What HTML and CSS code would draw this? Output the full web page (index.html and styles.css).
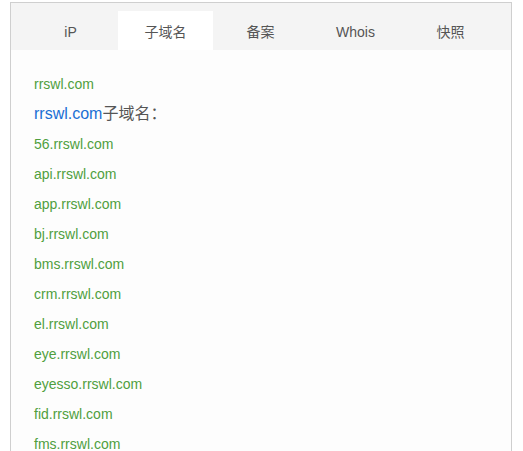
FILE: index.html
```html
<!DOCTYPE html>
<html lang="zh">
<head>
<meta charset="utf-8">
<link rel="stylesheet" href="styles.css">
</head>
<body>
<div class="panel">
  <div class="tabs">
    <div class="tab">iP</div>
    <div class="tab active">子域名</div>
    <div class="tab">备案</div>
    <div class="tab">Whois</div>
    <div class="tab">快照</div>
  </div>
  <div class="content">
    <div class="item">rrswl.com</div>
    <div class="heading"><span class="dom">rrswl.com</span>子域名：</div>
    <div class="item">56.rrswl.com</div>
    <div class="item">api.rrswl.com</div>
    <div class="item">app.rrswl.com</div>
    <div class="item">bj.rrswl.com</div>
    <div class="item">bms.rrswl.com</div>
    <div class="item">crm.rrswl.com</div>
    <div class="item">el.rrswl.com</div>
    <div class="item">eye.rrswl.com</div>
    <div class="item">eyesso.rrswl.com</div>
    <div class="item">fid.rrswl.com</div>
    <div class="item">fms.rrswl.com</div>
  </div>
</div>
</body>
</html>
```
FILE: styles.css
```css
html, body {
  margin: 0;
  padding: 0;
  background: #fff;
  overflow: hidden;
}
body {
  font-family: "Liberation Sans", Arial, "Noto Sans CJK SC", sans-serif;
  font-size: 14px;
  color: #555;
}
.panel {
  margin: 2px 0 0 10px;
  width: 502px;
  box-sizing: border-box;
  border: 1px solid #cfcfcf;
  background: #fdfdfd;
}
.tabs {
  display: flex;
  background: #f4f4f4;
  padding: 8px 0 0 12px;
}
.tab {
  width: 95px;
  height: 39px;
  box-sizing: border-box;
  padding-top: 3px;
  line-height: 36px;
  text-align: center;
  font-size: 14px;
  color: #555;
}
.tab.active {
  background: #fff;
}
.content {
  padding: 19px 23px 0;
}
.item {
  line-height: 30px;
  height: 30px;
  font-size: 14px;
  color: #4f9f3e;
}
.heading {
  line-height: 30px;
  height: 30px;
  font-size: 16px;
  color: #555;
}
.dom {
  color: #1a6fd4;
}
```
